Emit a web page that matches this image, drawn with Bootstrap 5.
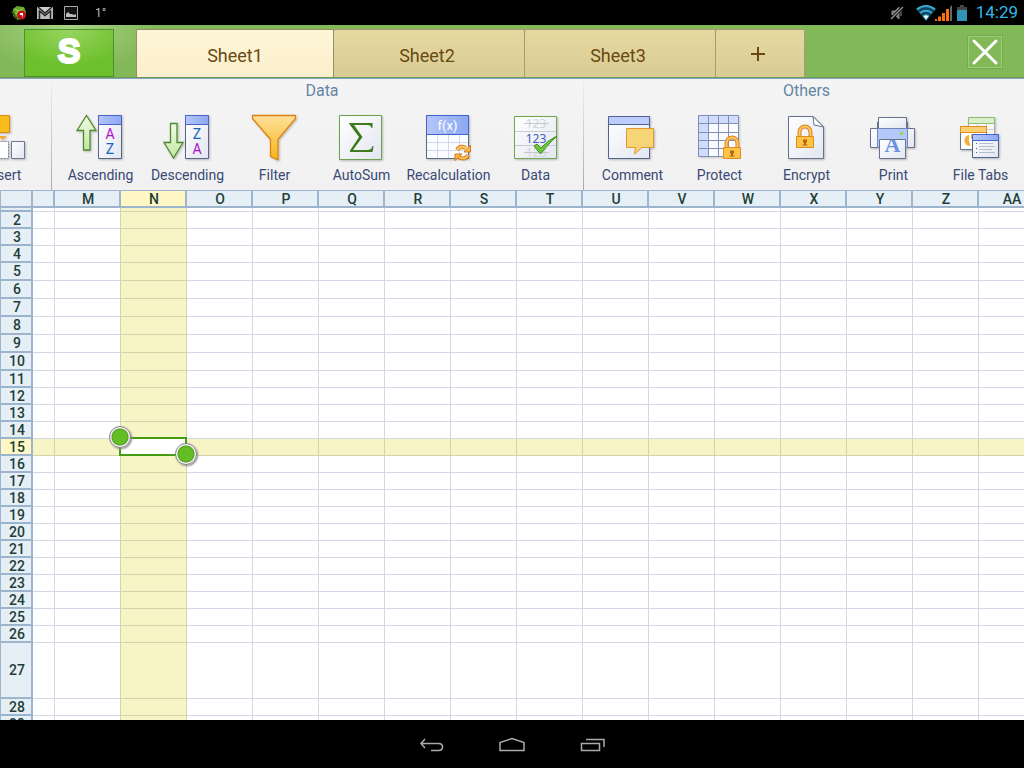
<!DOCTYPE html>
<html lang="en">
<head>
<meta charset="utf-8">
<meta name="viewport" content="width=device-width, initial-scale=1">
<title>Sheet1</title>
<link rel="stylesheet" href="https://cdn.jsdelivr.net/npm/bootstrap@5.3.0/dist/css/bootstrap.min.css">
<style>
body{font-family:Roboto,"Noto Sans",sans-serif;background:#fff}
svg{display:block;flex:none}
button{border:0;padding:0;background:none;font-family:inherit}
.status-bar{height:25px;padding:0 6px 0 11px;background:#000}
.status-bar .temp{font-size:12px;line-height:16px;color:#bbb}
.status-bar time{font-size:17px;line-height:25px;color:#33b5e5}
.title-bar{height:54px;padding-left:24px;background:radial-gradient(ellipse 90px 50px at 68px 0,#a8d384,#82b858);border-bottom:1px solid #84a5bd;box-shadow:inset 0 -1px #6f9a58}
.brand-btn{width:90px;height:48px;margin:4px 22px 0 0;padding-bottom:4px;border:1px solid #4b922a;background:radial-gradient(ellipse 60px 36px at 50% 0,#98d560,#6dc02c);color:#fff;font:32px/36px "Liberation Sans",sans-serif;-webkit-text-stroke:4px #fff;stroke-linejoin:round;text-shadow:1px 1px 1px #4b8f24}
.sheet-tab{width:191px;height:48px;margin-top:4px;border:1px solid #a69b74;border-left-width:0;border-bottom:0;border-radius:2px 2px 0 0;background:linear-gradient(#e5d9a0,#d8cc95);color:#6a4812;font-size:18px;line-height:48px;padding:2px 4px 0 0}
.sheet-tab.current{width:198px;padding-right:0;border-left-width:1px;background:linear-gradient(#fff6d6,#faefcc);border-color:#958f69}
.sheet-tab.plus{width:89px}
.close-btn{width:34px;height:32px;margin:11px 22px 0 auto;border:1px solid #9dcc7b;outline:1px solid #75a84f}
.ribbon{height:111px;background:linear-gradient(#f4f4f4,#f1f1f1)}
.tool-group{flex:none;padding:0 4px 0 5px;border-right:1px solid;border-image:linear-gradient(#f1f1f1,#aaa) 1}
.tool-group.first-group{width:52px}
.group-name{height:33px;font-size:16px;line-height:24px;color:#6485a5}
.tool{flex:none;width:87px;font-size:14px;line-height:22px;color:#3a4975}
.sheet{border-collapse:separate;border-spacing:0;table-layout:fixed;width:1045px;font-size:14px;line-height:14px;color:#1e4038}
.sheet th,.sheet td{padding:0;text-align:center;vertical-align:middle}
.sheet th{padding-left:2px;font-weight:500;background:#e6eff6;border:solid #9cb5cd;border-width:0 2px 2px 0}
.sheet thead th{height:18px;border-top-width:1px}
.sheet tr>:first-child{border-left-width:1px}
.sheet td{border:solid #d6d6e6;border-width:0 1px 1px 0}
.sheet .lit{background:#f7f5c5;border-color:#d3d3ac}
.sheet th.lit{background:#fff8c4;border-color:#9cb5cd}
.sheet .edge{border-right-color:#d3d3ac}
.sheet .r1{height:4px}.sheet .r17{height:17px}.sheet .r18{height:18px}.sheet .r56{height:56px}
.sheet .r1 th,.sheet .r1 td{font-size:0;line-height:0}
.pick-box{inset:-2px -1px -1px -2px;border:2px solid #439c13;background:#fff}
.knob{width:22px;height:22px;border-radius:50%;border:1px solid #858585;background:radial-gradient(circle,#63bd24 0 7px,#4e9b22 8px,#f4f4f4 9px);box-shadow:1px 1px 2px #888}
.knob.start{left:-12px;top:-13px}
.knob.end{right:-11px;bottom:-10px}
.nav-bar{height:48px;padding-top:1px;background:#000}
.nav-bar button{width:80px;height:48px}
</style>
<script src="https://cdn.jsdelivr.net/npm/bootstrap@5.3.0/dist/js/bootstrap.bundle.min.js"></script>
</head>
<body class="d-flex flex-column vh-100 overflow-hidden">
<svg width="0" height="0" class="position-absolute" aria-hidden="true">
<defs>
<linearGradient id="gPage" x2="1" y2="1"><stop stop-color="#fff"/><stop offset="1" stop-color="#e3e6f0"/></linearGradient>
<linearGradient id="gBlue" x2="1" y2="0"><stop stop-color="#b4c6fb"/><stop offset="1" stop-color="#8ca8f4"/></linearGradient>
<linearGradient id="gOrange" x2="0" y2="1"><stop stop-color="#fde19a"/><stop offset="1" stop-color="#f7b417"/></linearGradient>
<linearGradient id="gGreen" x2="0" y2="1"><stop stop-color="#f0fae6"/><stop offset="1" stop-color="#c2e8a0"/></linearGradient>
<filter id="drop" x="-20%" y="-20%" width="150%" height="150%"><feDropShadow dx="1" dy="1" stdDeviation="1" flood-opacity=".25"/></filter>
<g id="lock"><path d="M3.500 11V7a5.500 5.500 0 0 1 11 0v4" fill="none" stroke="#dc7d1c" stroke-width="4"/><path d="M3.500 11V7a5.500 5.500 0 0 1 11 0v4" fill="none" stroke="#fcc964" stroke-width="2"/><path d="M.5 11.500h17v11H.5z" fill="#fcc644" stroke="#e08a22"/><path d="M7 14.500h4v3l-1 0v2h1.500v1h-5v-1H8v-2H7z" fill="#b9641c"/></g>
</defs>
</svg>

<div class="status-bar d-flex align-items-center flex-shrink-0">
  <svg width="16" height="16" viewBox="0 0 16 16"><path d="M2 4l4-3 7 1 2 5-2 6-6 2-5-4z" fill="#64a52b"/><path d="M4 4l3 2 5-2M6 8l-3 2M7 6v5" stroke="#b4df4a" fill="none"/><path d="M1 6l3 5 2 3" stroke="#335f17" stroke-width="2" fill="none"/><circle cx="10.500" cy="10" r="4.500" fill="#c5151c"/><path d="M9 8h3v2l-1 3v-3H9z" fill="#fff"/></svg>
  <svg class="ms-2 me-1" width="20" height="16" viewBox="0 0 20 16"><path d="M2 2h16v12H2z" fill="#bbb"/><path d="M4.500 14V6L10 10.500 15.500 6v8" fill="#bbb" stroke="#222" stroke-width="1.500"/><path d="M3 2l7 6 7-6" fill="#ccc" stroke="#222" stroke-width="1.500"/></svg>
  <svg class="ms-1" width="16" height="16" viewBox="0 0 16 16"><path d="M1.500 1.500h13v13h-13z" fill="#111" stroke="#aaa"/><path d="M3 12V9l2-2 2 2h2l2 1 2-1v3z" fill="#bbb"/></svg>
  <span class="temp ms-3">1°</span>
  <svg class="ms-auto me-1" width="14" height="16" viewBox="0 0 14 16"><path d="M2 6h3l4-4v12l-4-4H2zM11 5v6" fill="#777" stroke="#888"/><path d="M1 14L13 2" stroke="#000" stroke-width="3"/><path d="M1 14L13 2" stroke="#999" stroke-width="1.300"/></svg>
  <svg class="ms-2" width="36" height="18" viewBox="0 0 36 18"><path d="M0 5q10-8 20 0L10 17z" fill="#12465a"/><g fill="none" stroke="#36a9d2" stroke-width="2"><path d="M1 5.500q9-7 18 0"/><path d="M4 9q6-4.500 12 0"/></g><path d="M7 12q3-2.500 6 0l-3 4z" fill="#fff" stroke="#36a9d2"/><path d="M19 15h2v2h-2zM22 12.500h3V17h-3zM26 9h3v8h-3zM30 5h3v12h-3z" fill="#ff6f0d"/><path d="M34 3l2-2v16h-2z" fill="#666"/></svg>
  <svg class="ms-1 me-2" width="12" height="18" viewBox="0 0 12 18"><path d="M4 1h4v2h3v14H1V3h3z" fill="#444"/><path d="M1 6h10v11H1z" fill="#2f94b5"/></svg>
  <time>14:29</time>
</div>

<header class="title-bar d-flex flex-shrink-0">
  <button class="brand-btn" type="button" aria-label="Menu">S</button>
  <button class="sheet-tab current" type="button">Sheet1</button>
  <button class="sheet-tab" type="button">Sheet2</button>
  <button class="sheet-tab" type="button">Sheet3</button>
  <button class="sheet-tab plus d-flex align-items-center justify-content-center" type="button" aria-label="Add sheet"><svg width="16" height="16" viewBox="0 0 16 16"><path d="M1 7h14M8 0v14" stroke="#6a4812" stroke-width="2"/></svg></button>
  <button class="close-btn" type="button" aria-label="Close"><svg width="32" height="30" viewBox="0 0 32 30"><path d="M5 4l22 22M27 4L5 26" stroke="#fff" stroke-width="3" stroke-linecap="round"/></svg></button>
</header>

<div class="ribbon d-flex overflow-hidden flex-shrink-0">
  <section class="tool-group first-group d-flex justify-content-end overflow-hidden">
    <div><div class="group-name"></div>
    <button class="tool d-flex flex-column align-items-center" type="button"><svg width="53" height="52" viewBox="0 0 53 52"><g filter="url(#drop)"><path d="M14.500 3.500h18v17h-18z" fill="#f8bd1f" stroke="#da8b16"/><path d="M21 24h9l-4.500 4z" fill="#f5a83c"/><path d="M15.500 29.500h16v17h-16z" fill="#fff" stroke="#777e94" stroke-dasharray="2 1"/><path d="M34.500 29.500h13v17h-13z" fill="url(#gPage)" stroke="#6e7896"/></g></svg>Insert</button></div>
  </section>
  <section class="tool-group">
    <div class="group-name text-center ps-2">Data</div>
    <div class="d-flex">
      <button class="tool d-flex flex-column align-items-center" type="button"><svg width="53" height="52" viewBox="0 0 53 52"><g filter="url(#drop)"><path d="M12.500 3.500L22 18.500H16V38H9.500V18.500H3z" fill="url(#gGreen)" stroke="#518832" stroke-width="1.300"/><path d="M24.500 3.500h23v43h-23z" fill="url(#gPage)" stroke="#596585"/><path d="M24.500 3.500h23v9h-23z" fill="url(#gBlue)" stroke="#4d65c6"/></g><g font-size="14" text-anchor="middle"><text x="36" y="27" fill="#a814c4">A</text><text x="36" y="42" fill="#1763c0">Z</text></g></svg>Ascending</button>
      <button class="tool d-flex flex-column align-items-center" type="button"><svg width="53" height="52" viewBox="0 0 53 52"><g filter="url(#drop)"><path d="M12.500 46L22 30.500H16V11.500H9.500V30.500H3z" fill="url(#gGreen)" stroke="#518832" stroke-width="1.300"/><path d="M24.500 3.500h23v43h-23z" fill="url(#gPage)" stroke="#596585"/><path d="M24.500 3.500h23v9h-23z" fill="url(#gBlue)" stroke="#4d65c6"/></g><g font-size="14" text-anchor="middle"><text x="36" y="27" fill="#1763c0">Z</text><text x="36" y="42" fill="#a814c4">A</text></g></svg>Descending</button>
      <button class="tool d-flex flex-column align-items-center" type="button"><svg width="53" height="52" viewBox="0 0 53 52"><path filter="url(#drop)" d="M4.500 3.500h43v3L30 27.500V48l-7.500-3.500v-17L4.500 6.500z" fill="url(#gOrange)" stroke="#dc8018" stroke-width="1.300" stroke-linejoin="round"/></svg>Filter</button>
      <button class="tool d-flex flex-column align-items-center" type="button"><svg width="53" height="52" viewBox="0 0 53 52"><path filter="url(#drop)" d="M4.500 3.500h42v44h-42z" fill="url(#gPage)" stroke="#69a34b"/><path d="M14 11h23.500v5h-1q-.5-3-4-3H19l8.500 12L18 38h14.500q4 0 5-4h1l-1 6H15v-1.500l9-13.500-9-12z" fill="#3f7a1c"/></svg>AutoSum</button>
      <button class="tool d-flex flex-column align-items-center" type="button"><svg width="53" height="52" viewBox="0 0 53 52"><g filter="url(#drop)"><path d="M4.500 3.500h42v43h-42z" fill="#fbfcff" stroke="#596990"/><path d="M15.500 23v23M26.500 23v23M37.500 23v23M5 30.500h41M5 38.500h41" stroke="#d0d9ea"/><path d="M4.500 3.500h42v19h-42z" fill="url(#gBlue)" stroke="#4563ce"/></g><text x="25.500" y="18" font-size="13" text-anchor="middle" fill="#fff">f(x)</text><g fill="none" stroke="#db7817" stroke-width="4"><path d="M35 38q3-5 9-2M46 43q-3 6-9 2"/></g><path d="M42 40h6.500v-7zM40 42h-7v6.500z" fill="#f9b840" stroke="#db7817"/><g fill="none" stroke="#fcc75a" stroke-width="2"><path d="M35 38q3-5 9-2M46 43q-3 6-9 2"/></g></svg>Recalculation</button>
      <button class="tool d-flex flex-column align-items-center" type="button"><svg width="53" height="52" viewBox="0 0 53 52"><path filter="url(#drop)" d="M5.500 4.500h42v42h-42z" fill="url(#gPage)" stroke="#6ca84d"/><path d="M6 19.500h41M6 33.500h41" stroke="#c9cdd3"/><g font-family="Noto Sans" font-size="12" text-anchor="middle"><text x="27" y="16" fill="#cfd4da">123</text><text x="27" y="31" fill="#405cc0">123</text><text x="27" y="45" fill="#cfd4da">123</text></g><path d="M15 11.500h25M15 40.500h25" stroke="#c4c9cf"/><path d="M25 34l3-2 4 4q7-8 16-12-8 7-16.500 18z" fill="#72c63c" stroke="#3e8d1d"/></svg>Data</button>
    </div>
  </section>
  <section class="tool-group border-0">
    <div class="group-name text-center">Others</div>
    <div class="d-flex">
      <button class="tool d-flex flex-column align-items-center" type="button"><svg width="53" height="52" viewBox="0 0 53 52"><g filter="url(#drop)"><path d="M2.500 4.500h41v42h-41z" fill="url(#gPage)" stroke="#53648f"/><path d="M2.500 4.500h41v8h-41z" fill="#bccdfd" stroke="#53648f"/><path d="M20.500 16.500h27v19H36L28.500 42l1-6.500h-9z" fill="#f6d577" stroke="#e2962f"/></g></svg>Comment</button>
      <button class="tool d-flex flex-column align-items-center" type="button"><svg width="53" height="52" viewBox="0 0 53 52"><path filter="url(#drop)" d="M5.500 3.500h40v41h-40z" fill="#fafbff"/><path d="M5 3h41v8H5zM5 3h10v42H5z" fill="#d0dcfc"/><path d="M5.500 3.500h40v41h-40zM15.500 3v42M25.500 3v42M35.500 3v42M5 11.500h41M5 20.500h41M5 28.500h41M5 36.500h41" fill="none" stroke="#8090b2"/><use href="#lock" x="30" y="24"/></svg>Protect</button>
      <button class="tool d-flex flex-column align-items-center" type="button"><svg width="53" height="52" viewBox="0 0 53 52"><path filter="url(#drop)" d="M8.500 4.500H33L43.500 15v31.500h-35z" fill="url(#gPage)" stroke="#65718f"/><path d="M33 4.500l1 8.500 9.500 2z" fill="#fff" stroke="#65718f"/><use href="#lock" x="16" y="13"/></svg>Encrypt</button>
      <button class="tool d-flex flex-column align-items-center" type="button"><svg width="53" height="52" viewBox="0 0 53 52"><g filter="url(#drop)"><path d="M3.500 16.500h44v19h-44z" fill="url(#gPage)" stroke="#65718f"/><path d="M10.500 10v7h30v-7" fill="none" stroke="#65718f"/><path d="M11.500 5.500h28v11h-28z" fill="url(#gPage)" stroke="#65718f"/><path d="M10.500 16.500h30v19h-30z" fill="#b5c8fa" stroke="#7084bf"/><path d="M12.500 27.500h26v19h-26z" fill="url(#gPage)" stroke="#65718f"/></g><circle cx="34.500" cy="21.500" r="1.700" fill="#86df45"/><svg x="13" y="28" width="25" height="18"><text x="12.500" y="11.500" font-family="Liberation Serif" font-weight="bold" font-size="22" text-anchor="middle" fill="#6b92df">A</text></svg></svg>Print</button>
      <button class="tool d-flex flex-column align-items-center" type="button"><svg width="53" height="52" viewBox="0 0 53 52"><g filter="url(#drop)"><path d="M14.500 5.500h26v24h-26z" fill="#f8f8f8" stroke="#a9b0aa"/><path d="M23.500 12v10M32.500 12v10M15 17.500h25" stroke="#d2d5d2"/><path d="M14.500 5.500h26v6h-26z" fill="#d8efc9" stroke="#8fbd73"/><path d="M6.500 14.500h26v23h-26z" fill="#fff" stroke="#65718f"/><path d="M6.500 14.500h26v6h-26z" fill="#fcd071" stroke="#df8d20"/><path d="M15 29v-6q-5 1-4.500 6t6 5zM17 27v-5q3 0 4 3z" fill="#f5af3c"/><path d="M18.500 22.500h26v23h-26z" fill="url(#gPage)" stroke="#53648f"/><path d="M18.500 22.500h26v6h-26z" fill="url(#gBlue)" stroke="#4563ce"/></g><path d="M25 31.500h14M25 34.500h16M25 37.500h13M25 40.500h16" stroke="#b7bccb"/><path d="M22.500 31v1M22.500 36v1M22.500 40v1" stroke="#3e5fae"/></svg>File Tabs</button>
    </div>
  </section>
</div>

<main class="flex-grow-1 overflow-hidden" style="min-height:0">
  <table class="sheet"><colgroup id="cols"></colgroup><thead id="head"></thead><tbody id="body"></tbody></table>
</main>

<nav class="nav-bar d-flex justify-content-center flex-shrink-0" aria-label="System">
  <button class="d-flex align-items-center justify-content-center" type="button" aria-label="Back"><svg width="26" height="16" viewBox="0 0 26 16"><path d="M6 2L2 6.500 6 11M2 6.500h17.500q4 0 4 3.500t-4 3.500H12" fill="none" stroke="#aaa" stroke-width="1.500"/></svg></button>
  <button class="d-flex align-items-center justify-content-center" type="button" aria-label="Home"><svg width="26" height="16" viewBox="0 0 26 16"><path d="M1 13.500V5.500L13 1.500l12 4v8z" fill="none" stroke="#aaa" stroke-width="1.500"/></svg></button>
  <button class="d-flex align-items-center justify-content-center" type="button" aria-label="Recent apps"><svg width="26" height="16" viewBox="0 0 26 16"><path d="M2.500 6.500h18v7h-18zM7 2.500h18V10" fill="none" stroke="#aaa" stroke-width="1.500"/></svg></button>
</nav>

<script>
const names = ["", "M", "N", "O", "P", "Q", "R", "S", "T", "U", "V", "W", "X", "Y", "Z", "AA"];
const activeCol = "N", activeRow = 15;
const lit = on => on ? ' class="lit"' : "";
document.getElementById("cols").innerHTML = '<col style="width:33px"><col style="width:22px">' + '<col style="width:66px">'.repeat(names.length - 1);
document.getElementById("head").innerHTML = "<tr><th></th>" + names.map(n => `<th scope="col"${lit(n === activeCol)}>${n}</th>`).join("") + "</tr>";
let rows = "";
for (let r = 1; r < 30; r++) {
  const size = r === 1 ? "r1" : r === 27 ? "r56" : r > 4 && r < 11 ? "r18" : "r17";
  rows += `<tr class="${size}"><th scope="row"${lit(r === activeRow)}>${r === 1 ? "" : r}</th>`;
  names.forEach((n, i) => {
    if (n === activeCol && r === activeRow)
      rows += '<td class="position-relative"><div class="pick-box position-absolute"></div><div class="knob start position-absolute"></div><div class="knob end position-absolute"></div></td>';
    else
      rows += `<td class="${n === activeCol || r === activeRow ? "lit" : names[i + 1] === activeCol ? "edge" : ""}"></td>`;
  });
  rows += "</tr>";
}
document.getElementById("body").innerHTML = rows;
</script>
</body>
</html>
